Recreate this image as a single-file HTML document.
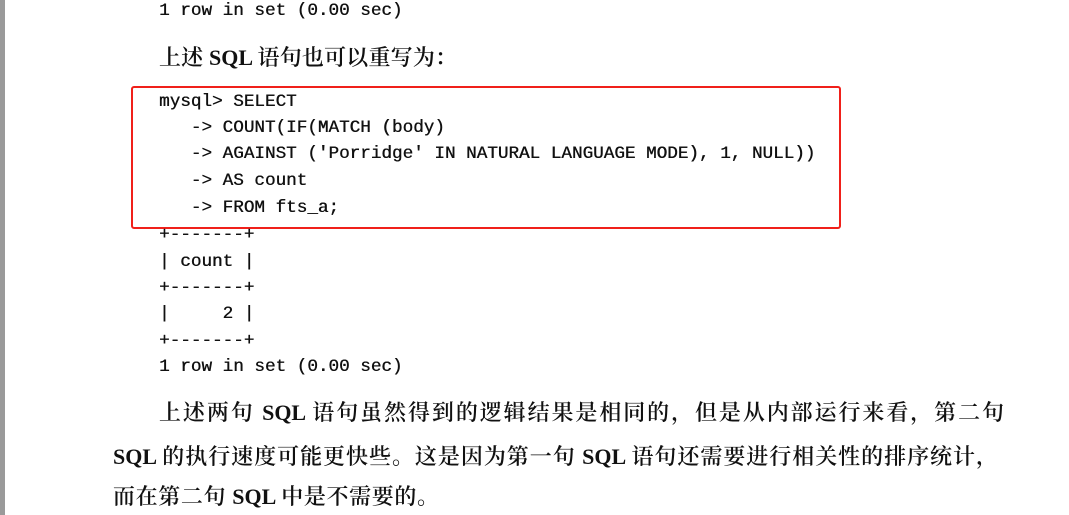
<!DOCTYPE html>
<html><head><meta charset="utf-8"><style>
body{margin:0;width:1069px;height:515px;background:#fff;position:relative;overflow:hidden}
.bar{position:absolute;left:0;top:0;width:5px;height:515px;background:#9a9a9a}
.m{position:absolute;left:159px;font-family:"Liberation Mono",monospace;font-size:17.65px;color:#111;white-space:pre;line-height:20px;text-shadow:0.4px 0 0 #111}
.s{position:absolute;font-family:"Liberation Serif","Noto Serif CJK SC",serif;font-size:22px;font-weight:600;color:#111;white-space:nowrap;line-height:26px;text-align:justify;text-align-last:justify}
.box{position:absolute;left:131px;top:86px;width:706px;height:139px;border:2.5px solid #f0201a;border-radius:3px}
</style></head><body>
<div class="bar"></div>
<div class="m" style="top:1px">1 row in set (0.00 sec)</div>
<div class="s" style="left:159px;top:45px;width:298px">上述 SQL 语句也可以重写为：</div>
<div class="box"></div>
<div class="m" style="top:92px">mysql> SELECT</div>
<div class="m" style="top:118px">   -> COUNT(IF(MATCH (body)</div>
<div class="m" style="top:144px">   -> AGAINST ('Porridge' IN NATURAL LANGUAGE MODE), 1, NULL))</div>
<div class="m" style="top:171px">   -> AS count</div>
<div class="m" style="top:198px">   -> FROM fts_a;</div>
<div class="m" style="top:225px">+-------+</div>
<div class="m" style="top:252px">| count |</div>
<div class="m" style="top:278px">+-------+</div>
<div class="m" style="top:304px">|     2 |</div>
<div class="m" style="top:331px">+-------+</div>
<div class="m" style="top:357px">1 row in set (0.00 sec)</div>
<div class="s" style="left:159px;top:400px;width:845px">上述两句 SQL 语句虽然得到的逻辑结果是相同的，但是从内部运行来看，第二句</div>
<div class="s" style="left:113px;top:444px;width:885px">SQL 的执行速度可能更快些。这是因为第一句 SQL 语句还需要进行相关性的排序统计，</div>
<div class="s" style="left:113px;top:484px;width:326px">而在第二句 SQL 中是不需要的。</div>
</body></html>
